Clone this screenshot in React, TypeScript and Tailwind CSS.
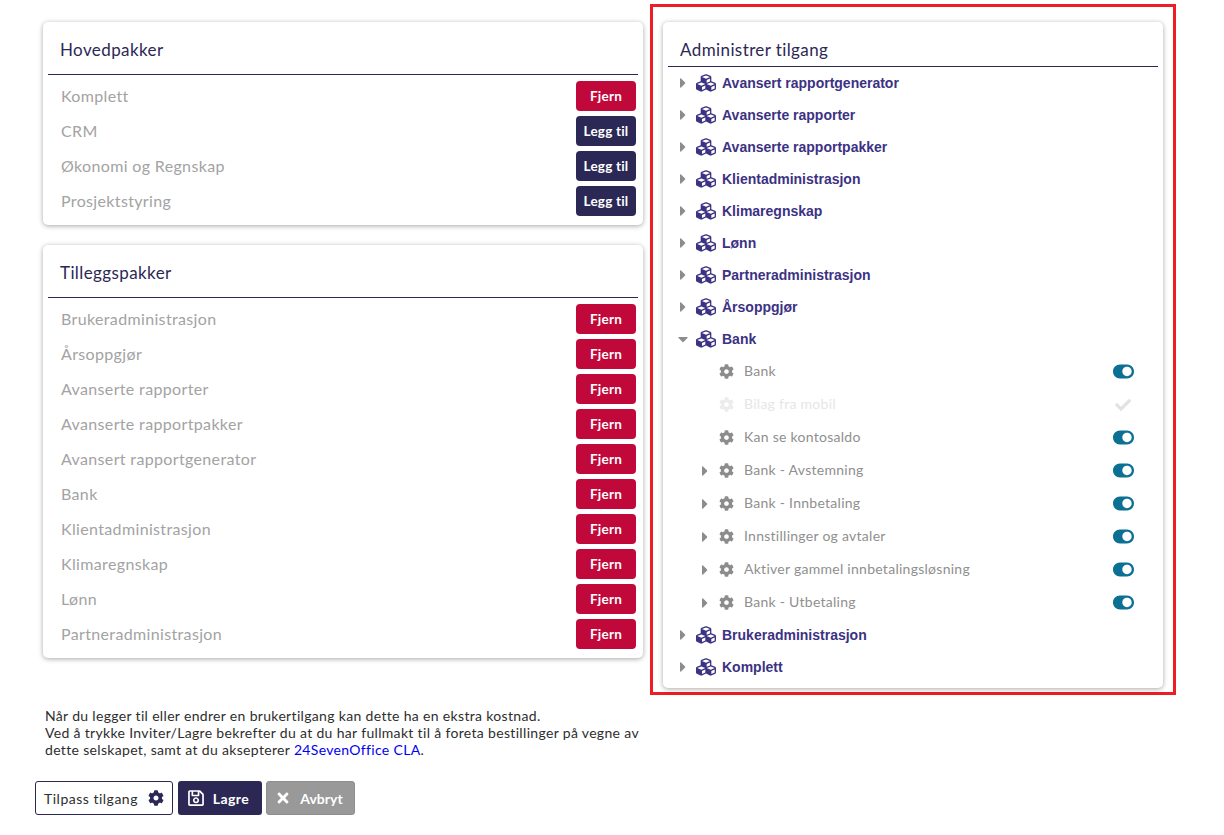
import { FaCaretDown, FaCaretRight, FaCheck, FaCog, FaCubes, FaRegSave, FaTimes, FaToggleOn } from "react-icons/fa";

const mainPackages = [
  { name: "Komplett", active: true },
  { name: "CRM", active: false },
  { name: "Økonomi og Regnskap", active: false },
  { name: "Prosjektstyring", active: false },
];

const extraPackages = [
  "Brukeradministrasjon",
  "Årsoppgjør",
  "Avanserte rapporter",
  "Avanserte rapportpakker",
  "Avansert rapportgenerator",
  "Bank",
  "Klientadministrasjon",
  "Klimaregnskap",
  "Lønn",
  "Partneradministrasjon",
].map((name) => ({ name, active: true }));

const treeBefore = [
  "Avansert rapportgenerator",
  "Avanserte rapporter",
  "Avanserte rapportpakker",
  "Klientadministrasjon",
  "Klimaregnskap",
  "Lønn",
  "Partneradministrasjon",
  "Årsoppgjør",
];

const bankItems = [
  { name: "Bank", caret: false, disabled: false },
  { name: "Bilag fra mobil", caret: false, disabled: true },
  { name: "Kan se kontosaldo", caret: false, disabled: false },
  { name: "Bank - Avstemning", caret: true, disabled: false },
  { name: "Bank - Innbetaling", caret: true, disabled: false },
  { name: "Innstillinger og avtaler", caret: true, disabled: false },
  { name: "Aktiver gammel innbetalingsløsning", caret: true, disabled: false },
  { name: "Bank - Utbetaling", caret: true, disabled: false },
];

function PackageCard({ title, rows }: { title: string; rows: { name: string; active: boolean }[] }) {
  return (
    <section className="rounded-[5px] bg-white px-[5px] pb-[9px] shadow-[0_1px_5px_rgba(0,0,0,0.35)]">
      <h2 className="h-[53px] border-b border-[#2b2856] pl-[12px] pt-[18px] text-[17px] leading-[20px] tracking-[0.4px] text-[#2b2856]">
        {title}
      </h2>
      <div className="mt-[6px] flex flex-col gap-[5px]">
        {rows.map((row) => (
          <div key={row.name} className="flex h-[30px] items-center justify-between pl-[13px] pr-[2px]">
            <span className="text-[16px] tracking-[0.35px] text-[#a3a3a3]">{row.name}</span>
            <button
              type="button"
              className={`h-[30px] w-[60px] rounded-[4px] text-[13.5px] font-bold tracking-[0.2px] text-white ${
                row.active ? "bg-[#c1083a]" : "bg-[#2b2856]"
              }`}
            >
              {row.active ? "Fjern" : "Legg til"}
            </button>
          </div>
        ))}
      </div>
    </section>
  );
}

function TreeGroup({ name, open }: { name: string; open?: boolean }) {
  return (
    <div className="flex h-[32px] items-center">
      <span className="flex w-[28px] justify-center pl-[2px] text-[#8c8c8c]">
        {open ? <FaCaretDown size={16} /> : <FaCaretRight size={16} />}
      </span>
      <FaCubes size={20} className="text-[#3b3283]" />
      <span className="ml-[6px] font-['Liberation_Sans',sans-serif] text-[14px] font-bold text-[#3b3283]">{name}</span>
    </div>
  );
}

export default function App() {
  return (
    <div className="flex h-[835px] w-[1224px] items-start overflow-hidden bg-white font-['Lato',sans-serif]">
      <div className="ml-[43px] mt-[22px] w-[600px]">
        <PackageCard title="Hovedpakker" rows={mainPackages} />
        <div className="mt-[20px]">
          <PackageCard title="Tilleggspakker" rows={extraPackages} />
        </div>
        <p className="ml-[2px] mt-[49px] whitespace-nowrap text-[14px] leading-[17px] tracking-[0.33px] text-[#2e2e2e]">
          Når du legger til eller endrer en brukertilgang kan dette ha en ekstra kostnad.
          <br />
          Ved å trykke Inviter/Lagre bekrefter du at du har fullmakt til å foreta bestillinger på vegne av
          <br />
          dette selskapet, samt at du aksepterer <span className="text-[#0000ee]">24SevenOffice CLA</span>.
        </p>
        <div className="-ml-[8px] mt-[23px] flex gap-[5px]">
          <button
            type="button"
            className="flex h-[34px] w-[138px] items-center justify-center gap-[10px] rounded-[3px] border border-[#2b2856] bg-white text-[14px] tracking-[0.5px] text-[#2e2e2e]"
          >
            Tilpass tilgang
            <FaCog size={16} className="text-[#2b2856]" />
          </button>
          <button
            type="button"
            className="flex h-[34px] w-[84px] items-center justify-center gap-[8px] rounded-[3px] bg-[#2b2856] pr-[4px] text-[14px] font-bold tracking-[0.4px] text-white"
          >
            <FaRegSave size={18} />
            Lagre
          </button>
          <button
            type="button"
            className="-ml-[1px] flex h-[34px] w-[89px] items-center justify-center gap-[9px] rounded-[3px] border border-[#8f8f8f] bg-[#999999] pr-[3px] text-[14px] font-bold text-white"
          >
            <FaTimes size={16} />
            Avbryt
          </button>
        </div>
      </div>

      <div className="ml-[7px] mt-[4px] h-[691px] w-[526px] border-[3px] border-[#ee1c25] pl-[10px] pt-[15px]">
        <section className="h-[666px] w-[500px] rounded-[5px] bg-white px-[5px] shadow-[0_1px_5px_rgba(0,0,0,0.35)]">
          <h2 className="h-[45px] border-b border-[#2b2856] pl-[12px] pt-[18px] text-[17px] leading-[20px] tracking-[0.4px] text-[#2b2856]">
            Administrer tilgang
          </h2>
          <div>
            {treeBefore.map((name) => (
              <TreeGroup key={name} name={name} />
            ))}
            <TreeGroup name="Bank" open />
            {bankItems.map((item) => (
              <div key={item.name} className="flex h-[33px] items-center">
                <span className="flex w-[45px] justify-end text-[#8c8c8c]">
                  {item.caret && <FaCaretRight size={16} />}
                </span>
                <FaCog size={15} className={`ml-[6px] ${item.disabled ? "text-[#ececec]" : "text-[#8c8c8c]"}`} />
                <span
                  className={`ml-[10px] flex-1 pb-[2px] text-[14px] tracking-[0.27px] ${
                    item.disabled ? "text-[#e6e6e6]" : "text-[#8f8f8f]"
                  }`}
                >
                  {item.name}
                </span>
                {item.disabled ? (
                  <FaCheck size={16} className="mr-[27px] text-[#e2e2e2]" />
                ) : (
                  <FaToggleOn size={21} className="mr-[24px] text-[#0c7095]" />
                )}
              </div>
            ))}
            <TreeGroup name="Brukeradministrasjon" />
            <TreeGroup name="Komplett" />
          </div>
        </section>
      </div>
    </div>
  );
}
